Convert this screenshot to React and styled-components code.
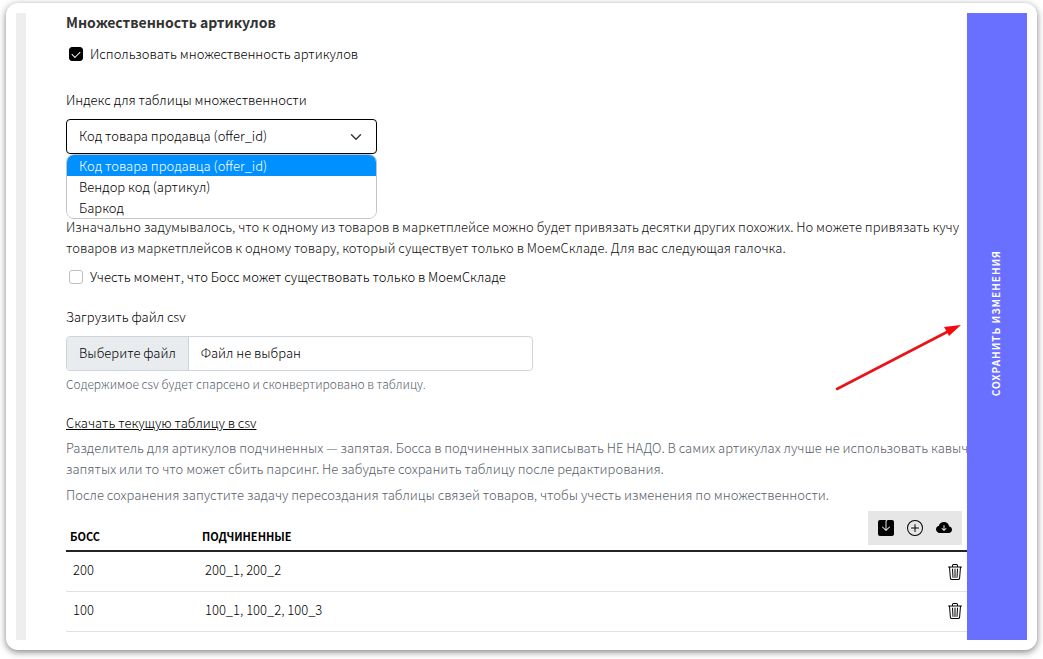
import React, { useState } from 'react'
import styled, { createGlobalStyle } from 'styled-components'
import {
  BsSaveFill,
  BsPlusCircle,
  BsCloudArrowDownFill,
  BsTrash3,
} from 'react-icons/bs'

const options = [
  'Код товара продавца (offer_id)',
  'Вендор код (артикул)',
  'Баркод',
]

const rows = [
  { boss: '200', children: '200_1, 200_2' },
  { boss: '100', children: '100_1, 100_2, 100_3' },
]

const App = () => {
  const [index, setIndex] = useState(options[0])
  const [multiple, setMultiple] = useState(true)
  const [onlyBoss, setOnlyBoss] = useState(false)

  return (
    <Window>
      <GlobalStyle />
      <Rail />
      <Content>
        <Title>Множественность артикулов</Title>
        <CheckLabel>
          <Checkbox
            type="checkbox"
            checked={multiple}
            onChange={e => setMultiple(e.target.checked)}
          />
          Использовать множественность артикулов
        </CheckLabel>

        <FieldLabel $top={25} htmlFor="index">
          Индекс для таблицы множественности
        </FieldLabel>
        <SelectBox>
          <Select id="index" value={index} onChange={e => setIndex(e.target.value)}>
            {options.map(option => (
              <option key={option}>{option}</option>
            ))}
          </Select>
          <Chevron viewBox="0 0 16 16" aria-hidden="true">
            <path d="m2 5 6 6 6-6" />
          </Chevron>
          <OptionList role="listbox" aria-label="Индекс">
            {options.map(option => (
              <Option
                key={option}
                role="option"
                aria-selected={option === index}
                $active={option === index}
                onClick={() => setIndex(option)}
              >
                {option}
              </Option>
            ))}
          </OptionList>
        </SelectBox>

        <Text>
          Изначально задумывалось, что к одному из товаров в маркетплейсе можно
          будет привязать десятки других похожих. Но можете привязать кучу
          <br />
          товаров из маркетплейсов к одному товару, который существует только в
          МоемСкладе. Для вас следующая галочка.
        </Text>
        <CheckLabel>
          <Checkbox
            type="checkbox"
            checked={onlyBoss}
            onChange={e => setOnlyBoss(e.target.checked)}
          />
          Учесть момент, что Босс может существовать только в МоемСкладе
        </CheckLabel>

        <FieldLabel $top={19} htmlFor="csv">
          Загрузить файл csv
        </FieldLabel>
        <FileBox>
          <FileButton>Выберите файл</FileButton>
          <FileName>Файл не выбран</FileName>
          <FileInput id="csv" type="file" accept=".csv" />
        </FileBox>
        <Help>Содержимое csv будет спарсено и сконвертировано в таблицу.</Help>

        <Download href="#csv">Скачать текущую таблицу в csv</Download>
        <Text $muted>
          Разделитель для артикулов подчиненных — запятая. Босса в подчиненных
          записывать НЕ НАДО. В самих артикулах лучше не использовать кавыче
          <br />
          запятых или то что может сбить парсинг. Не забудьте сохранить таблицу
          после редактирования.
        </Text>
        <Text $muted>
          После сохранения запустите задачу пересоздания таблицы связей товаров,
          чтобы учесть изменения по множественности.
        </Text>

        <Table>
          <thead>
            <tr>
              <HeadCell $width="132px">Босс</HeadCell>
              <HeadCell>Подчиненные</HeadCell>
              <ToolCell>
                <Toolbar>
                  <IconButton aria-label="Сохранить"><BsSaveFill /></IconButton>
                  <IconButton aria-label="Добавить"><BsPlusCircle /></IconButton>
                  <IconButton aria-label="Скачать"><BsCloudArrowDownFill /></IconButton>
                </Toolbar>
              </ToolCell>
            </tr>
          </thead>
          <tbody>
            {rows.map(row => (
              <tr key={row.boss}>
                <Cell>{row.boss}</Cell>
                <Cell>{row.children}</Cell>
                <Cell $right>
                  <IconButton aria-label="Удалить"><BsTrash3 /></IconButton>
                </Cell>
              </tr>
            ))}
          </tbody>
        </Table>
      </Content>
      <SaveButton>
        <SaveText>Сохранить изменения</SaveText>
      </SaveButton>
      <Arrow viewBox="0 0 128 68" aria-hidden="true">
        <path d="M2 66 L112 9" stroke="#e8141a" strokeWidth="2.6" strokeLinecap="round" />
        <path d="M126 2 L109 4 L112 9 L114 13 Z" fill="#f5090c" />
      </Arrow>
    </Window>
  )
}

export default App

const GlobalStyle = createGlobalStyle`
  * {
    box-sizing: border-box;
  }

  body {
    margin: 0;
    background: #fff;
    color: #000;
    font: 300 13px/21px "Noto Sans CJK SC", "Noto Sans", sans-serif;
  }

  button, input, select {
    font: inherit;
    color: inherit;
  }
`

const Window = styled.div`
  position: relative;
  display: flex;
  min-height: calc(100vh - 12px);
  margin: 3px 6px 9px;
  padding: 10px;
  border-radius: 12px;
  background: #fff;
  box-shadow: 0 2px 7px rgba(0, 0, 0, 0.5);
`

const Rail = styled.div`
  flex: none;
  width: 10px;
  background: #eee;
`

const Content = styled.main`
  flex: 1;
  min-width: 0;
  padding-left: 40px;
  overflow: hidden;
`

const Title = styled.h2`
  margin: 0 0 12px;
  color: #333;
  font-size: 14px;
  line-height: 18px;
  font-weight: 700;
`

const CheckLabel = styled.label`
  display: flex;
  align-items: center;
  gap: 7px;
  margin: 8px 0;
  padding-left: 3px;
`

const Checkbox = styled.input`
  flex: none;
  appearance: none;
  width: 14px;
  height: 14px;
  margin: 0;
  border: 1px solid #bfbfbf;
  border-radius: 3px;
  background: #fff;

  &:checked {
    border-color: #000;
    background: #000;
  }

  &:checked::after {
    content: '';
    display: block;
    width: 7px;
    height: 4px;
    margin: 3px auto 0;
    border: solid #fff;
    border-width: 0 0 1px 1px;
    transform: rotate(-45deg);
  }
`

const FieldLabel = styled.label`
  display: block;
  margin: ${props => props.$top}px 0 9px;
`

const SelectBox = styled.div`
  position: relative;
  width: 311px;
  max-width: 100%;
  margin-bottom: 62px;
`

const Select = styled.select`
  display: block;
  appearance: none;
  width: 100%;
  height: 35px;
  padding: 0 36px 2px 12px;
  border: 1px solid #000;
  border-radius: 4px;
  background: #fff;
  outline: none;
`

const Chevron = styled.svg`
  position: absolute;
  top: 12px;
  right: 15px;
  width: 12px;
  height: 12px;
  fill: none;
  stroke: #343a40;
  stroke-width: 2;
  stroke-linecap: round;
  stroke-linejoin: round;
  pointer-events: none;
`

const OptionList = styled.ul`
  position: absolute;
  top: 100%;
  left: 0;
  right: 0;
  margin: 0;
  padding: 0;
  list-style: none;
  border: 1px solid #c4c4c4;
  border-radius: 8px;
  background: #fff;
  overflow: hidden;
`

const Option = styled.li`
  padding: 0 12px;
  background: ${props => (props.$active ? '#0090ff' : '#fff')};
  color: ${props => (props.$active ? '#fff' : '#000')};
`

const Text = styled.p`
  margin: 0 0 5px;
  color: ${props => (props.$muted ? '#56606a' : '#111')};
  white-space: nowrap;
`

const FileBox = styled.div`
  position: relative;
  display: flex;
  width: 467px;
  max-width: 100%;
  height: 35px;
  border: 1px solid #ced4da;
  border-radius: 4px;
  overflow: hidden;
`

const FileButton = styled.span`
  padding: 5px 12px;
  border-right: 1px solid #ced4da;
  background: #e9ecef;
`

const FileName = styled.span`
  padding: 5px 12px;
`

const FileInput = styled.input`
  position: absolute;
  inset: 0;
  width: 100%;
  opacity: 0;
`

const Help = styled.div`
  margin: 4px 0 19px;
  color: #56606a;
  font-size: 12px;
  line-height: 18px;
`

const Download = styled.a`
  display: inline-block;
  margin-bottom: 4px;
  color: #000;
`

const Table = styled.table`
  width: 100%;
  margin-top: 6px;
  border-collapse: collapse;
`

const HeadCell = styled.th`
  width: ${props => props.$width || 'auto'};
  padding: 0 4px 5px;
  border-bottom: 2px solid #212529;
  font-size: 11px;
  line-height: 18px;
  font-weight: 700;
  text-align: left;
  text-transform: uppercase;
  vertical-align: bottom;
`

const ToolCell = styled.td`
  width: 100px;
  padding: 0 5px 5px;
  border-bottom: 2px solid #212529;
`

const Toolbar = styled.div`
  display: flex;
  align-items: center;
  justify-content: space-between;
  width: 94px;
  height: 34px;
  padding: 0 10px;
  background: #e6e6e6;
`

const IconButton = styled.button`
  display: inline-flex;
  padding: 0;
  border: 0;
  background: none;
  color: #000;
  font-size: 16px;
  vertical-align: middle;
  cursor: pointer;
`

const Cell = styled.td`
  height: 40px;
  padding: 0 ${props => (props.$right ? 4 : 7)}px 3px;
  border-bottom: 1px solid #dee2e6;
  text-align: ${props => (props.$right ? 'right' : 'left')};
`

const SaveButton = styled.button`
  flex: none;
  display: flex;
  align-items: center;
  justify-content: center;
  width: 60px;
  padding: 0 2px 6px 0;
  border: 0;
  background: #6970ff;
  color: #fff;
  cursor: pointer;
`

const SaveText = styled.span`
  writing-mode: vertical-rl;
  transform: rotate(180deg);
  font-size: 10px;
  line-height: 18px;
  font-weight: 700;
  letter-spacing: 1px;
  text-transform: uppercase;
`

/* pointer drawn over the page, aimed at the save button */
const Arrow = styled.svg`
  position: absolute;
  top: 320px;
  right: 74px;
  width: 128px;
  height: 68px;
  fill: none;
  pointer-events: none;
`
